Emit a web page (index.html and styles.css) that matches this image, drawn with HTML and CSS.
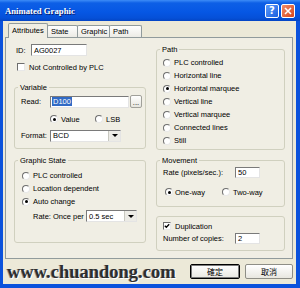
FILE: index.html
```html
<!DOCTYPE html>
<html lang="en">
<head>
  <meta charset="UTF-8" />
  <title>Animated Graphic</title>
  <link rel="stylesheet" href="styles.css">
</head>
<body>
  <div class="window">
    <div class="titlebar">
      <span class="title">Animated Graphic</span>
      <div class="caption-btns">
        <span class="cbtn help">?</span>
        <span class="cbtn close">
          <svg width="8" height="8" viewBox="0 0 8 8"><path d="M1 1L7 7M7 1L1 7" stroke="#fff" stroke-width="1.6"/></svg>
        </span>
      </div>
    </div>

    <div class="frame">
      <div class="tabs">
        <div class="tab active tab-attr">Attributes</div>
        <div class="tab tab-state">State</div>
        <div class="tab tab-graphic">Graphic</div>
        <div class="tab tab-path">Path</div>
      </div>

      <div class="panel">
        <div class="col">
          <div class="id-row">
            <span class="id-label">ID:</span>
            <span class="field id-field">AG0027</span>
          </div>
          <div class="check-row">
            <span class="checkbox"></span>
            <span>Not Controlled by PLC</span>
          </div>

          <div class="group variable">
            <span class="group-title">Variable</span>
            <div class="row field-row">
              <span class="row-label">Read:</span>
              <span class="field read-field"><span class="selected">D100</span></span>
              <span class="dots-btn">...</span>
            </div>
            <div class="row radio-pair">
              <span class="opt value-opt"><span class="radio checked"></span>Value</span>
              <span class="opt"><span class="radio"></span>LSB</span>
            </div>
            <div class="row field-row format-row">
              <span class="row-label">Format:</span>
              <span class="select format-select">BCD<span class="arrow"></span></span>
            </div>
          </div>

          <div class="group gstate">
            <span class="group-title">Graphic State</span>
            <div class="opt line"><span class="radio"></span>PLC controlled</div>
            <div class="opt line"><span class="radio"></span>Location dependent</div>
            <div class="opt line"><span class="radio checked"></span>Auto change</div>
            <div class="row rate-row">
              <span class="rate-label">Rate: Once per</span>
              <span class="select rate-select">0.5 sec<span class="arrow"></span></span>
            </div>
          </div>
        </div>

        <div class="col">
          <div class="group path">
            <span class="group-title">Path</span>
            <div class="opt line"><span class="radio"></span>PLC controlled</div>
            <div class="opt line"><span class="radio"></span>Horizontal line</div>
            <div class="opt line"><span class="radio checked"></span>Horizontal marquee</div>
            <div class="opt line"><span class="radio"></span>Vertical line</div>
            <div class="opt line"><span class="radio"></span>Vertical marquee</div>
            <div class="opt line"><span class="radio"></span>Connected lines</div>
            <div class="opt line"><span class="radio"></span>Still</div>
          </div>

          <div class="group movement">
            <span class="group-title">Movement</span>
            <div class="row num-row">
              <span class="num-label">Rate (pixels/sec.):</span>
              <span class="field num-field">50</span>
            </div>
            <div class="row way-row">
              <span class="opt way-opt"><span class="radio checked"></span>One-way</span>
              <span class="opt"><span class="radio"></span>Two-way</span>
            </div>
          </div>

          <div class="group duplication">
            <div class="row dup-row">
              <span class="checkbox checked">
                <svg width="6" height="6" viewBox="0 0 6 6"><path d="M0.8 2.8L2.3 4.3L5.2 1.2" fill="none" stroke="#000" stroke-width="1.3"/></svg>
              </span>
              <span>Duplication</span>
            </div>
            <div class="row num-row copies-row">
              <span class="num-label">Number of copies:</span>
              <span class="field num-field">2</span>
            </div>
          </div>
        </div>
      </div>

      <div class="footer">
        <span class="watermark">www.chuandong.com</span>
        <span class="btn default">確定</span>
        <span class="btn">取消</span>
      </div>
    </div>
  </div>
</body>
</html>
```

FILE: styles.css
```css
body {
  margin: 0;
  font-family: "Liberation Sans", Arial, sans-serif;
  font-size: 7.5px;
  color: #000;
  background: #fff;
}
.window {
  width: 300px;
  height: 288px;
  background: #ECE9D8;
  display: flex;
  flex-direction: column;
}
.titlebar {
  height: 21px;
  flex: none;
  display: flex;
  align-items: center;
  padding: 0 5px 0 5px;
  background: linear-gradient(#3D8CF7 0, #0D5FE6 3px, #0657E4 12px, #0550D8 18px, #0445C4 21px);
}
.title {
  font-family: "Liberation Serif", serif;
  font-weight: bold;
  font-size: 8.7px;
  color: #fff;
  text-shadow: 1px 1px 0 #0A1E70;
  margin-top: 1px;
}
.caption-btns {
  margin-left: auto;
  display: flex;
  gap: 2px;
}
.cbtn {
  width: 14px;
  height: 14px;
  box-sizing: border-box;
  border: 1px solid #fff;
  border-radius: 2px;
  display: flex;
  align-items: center;
  justify-content: center;
  color: #fff;
  font-family: "DejaVu Sans", sans-serif;
  font-weight: bold;
  font-size: 10px;
}
.help {
  background: linear-gradient(135deg, #5C9BFA, #1B5FE0);
}
.close {
  background: linear-gradient(135deg, #F08C6A, #D8461C);
}

.frame {
  flex: 1;
  display: flex;
  flex-direction: column;
  border: solid #0B52DC;
  border-width: 0 4px 4px 3px;
}

/* tabs */
.tabs {
  height: 14px;
  margin-top: 2px;
  padding-left: 5px;
  display: flex;
  align-items: flex-end;
  position: relative;
  z-index: 1;
}
.tab {
  height: 12px;
  box-sizing: border-box;
  border: 1px solid #919B9C;
  border-bottom: none;
  border-radius: 2px 2px 0 0;
  background: linear-gradient(#FEFEFE, #ECEBE5);
  display: flex;
  align-items: center;
  padding-left: 3px;
  margin-right: -1px;
}
.tab.active {
  height: 15px;
  margin-bottom: -1px;
  background: #F0EEE4;
  padding-bottom: 2px;
}
.tab-attr { width: 40px; padding-left: 3px; }
.tab-state { width: 31px; }
.tab-graphic { width: 33px; }
.tab-path { width: 33px; }

.panel {
  height: 222px;
  margin: 0 3px 0 2px;
  box-sizing: border-box;
  border: 1px solid #919B9C;
  background: #F0EEE4;
  display: grid;
  grid-template-columns: 132px 129px;
  column-gap: 10px;
  padding-left: 8px;
  align-content: start;
}
.col {
  display: flex;
  flex-direction: column;
}

.row {
  display: flex;
  align-items: center;
}
.opt {
  display: flex;
  align-items: center;
  gap: 3px;
}

/* controls */
.field {
  height: 12px;
  box-sizing: border-box;
  background: #fff;
  border: 1px solid;
  border-color: #7A7A7A #E4E4E4 #E4E4E4 #7A7A7A;
  display: flex;
  align-items: center;
  padding-left: 2px;
}
.select {
  position: relative;
  height: 12px;
  box-sizing: border-box;
  background: #fff;
  border: 1px solid;
  border-color: #7A7A7A #E4E4E4 #E4E4E4 #7A7A7A;
  display: flex;
  align-items: center;
  padding-left: 2px;
}
.arrow {
  position: absolute;
  right: 0;
  top: 0;
  width: 11px;
  height: 10px;
  background: #ECEBE6;
  border-left: 1px solid #C8C8C0;
  display: flex;
  align-items: center;
  justify-content: center;
}
.arrow::after {
  content: "";
  border: 3px solid transparent;
  border-top: 3px solid #000;
  border-bottom: none;
}
.radio {
  width: 8px;
  height: 8px;
  flex: none;
  box-sizing: border-box;
  border-radius: 50%;
  border: 1px solid;
  border-color: #6E6E6E #E8E8E8 #E8E8E8 #6E6E6E;
  background: #fff;
  display: flex;
  align-items: center;
  justify-content: center;
}
.radio.checked::after {
  content: "";
  width: 3px;
  height: 3px;
  border-radius: 50%;
  background: #000;
}
.checkbox {
  width: 8px;
  height: 8px;
  flex: none;
  box-sizing: border-box;
  border: 1px solid;
  border-color: #6E6E6E #E8E8E8 #E8E8E8 #6E6E6E;
  background: #fff;
  display: flex;
  align-items: center;
  justify-content: center;
}
.checkbox svg {
  display: block;
}

/* left column */
.id-row {
  margin-top: 6px;
  height: 12px;
  display: flex;
  align-items: center;
}
.id-label {
  width: 17px;
  padding-left: 2px;
  box-sizing: border-box;
}
.id-field { width: 56px; }
.check-row {
  margin-top: 7px;
  height: 8px;
  display: flex;
  align-items: center;
  gap: 4px;
  padding-left: 3px;
}

.group {
  position: relative;
  box-sizing: border-box;
  border: 1px solid #D0D0BF;
  border-radius: 3px;
}
.group-title {
  position: absolute;
  top: -5px;
  left: 3px;
  padding: 0 2px;
  line-height: 9px;
  background: #F0EEE4;
}

.variable {
  margin-top: 16px;
  height: 62px;
  padding: 7px 0 0 6px;
}
.field-row { height: 13px; }
.row-label { width: 29px; }
.read-field {
  width: 79px;
  padding-left: 1px;
}
.selected {
  background: #316AC5;
  color: #fff;
  padding: 0 1px;
  line-height: 9px;
}
.dots-btn {
  width: 12px;
  height: 13px;
  margin-left: 1px;
  box-sizing: border-box;
  border: 1px solid #A0A09A;
  border-radius: 2px;
  background: linear-gradient(#FFFFFF, #E6E5DE);
  display: flex;
  align-items: flex-end;
  justify-content: center;
  line-height: 9px;
}
.radio-pair {
  margin-top: 7px;
  height: 8px;
  padding-left: 29px;
}
.value-opt { width: 45px; }
.format-row { margin-top: 6px; }
.format-select { width: 71px; }

.gstate {
  margin-top: 11px;
  height: 83px;
  padding: 8px 0 0 7px;
}
.line { height: 13px; }
.rate-row {
  margin-top: 2px;
  height: 12px;
  padding-left: 11px;
}
.rate-label { width: 53px; }
.rate-select { width: 51px; }

/* right column */
.path {
  margin-top: 11px;
  height: 101px;
  padding: 6px 0 0 6px;
}
.movement {
  margin-top: 10px;
  height: 47px;
  padding: 5px 0 0 6px;
}
.num-row { height: 12px; }
.num-label { width: 72px; }
.num-field {
  width: 25px;
  height: 11px;
}
.way-row {
  margin-top: 10px;
  height: 8px;
  padding-left: 2px;
}
.way-opt {
  width: 57px;
  gap: 2px;
}
.duplication {
  margin-top: 9px;
  height: 35px;
  padding: 5px 0 0 6px;
}
.dup-row {
  height: 8px;
  gap: 4px;
}
.copies-row {
  margin-top: 3px;
  height: 11px;
}

/* footer */
.footer {
  flex: 1;
  display: flex;
  align-items: center;
  padding: 0 3px 0 4px;
  gap: 5px;
}
.watermark {
  font-family: "Liberation Serif", serif;
  font-weight: bold;
  font-size: 18.5px;
  color: #2E2E2E;
  text-shadow: 1px 1px 0 #FFFFFF, -1px 0 0 #9A9A9A;
  margin-right: auto;
  margin-top: 1px;
}
.btn {
  width: 48px;
  height: 15px;
  box-sizing: border-box;
  border: 1px solid #8E8E86;
  border-radius: 2px;
  background: linear-gradient(#FFFFFF, #E8E7E0);
  display: flex;
  align-items: center;
  justify-content: center;
  font-family: "Noto Sans CJK TC", sans-serif;
  font-size: 8px;
}
.btn.default {
  width: 50px;
  border: 1px solid #000;
  box-shadow: inset 0 0 0 1px #7A7A7A;
}
```
